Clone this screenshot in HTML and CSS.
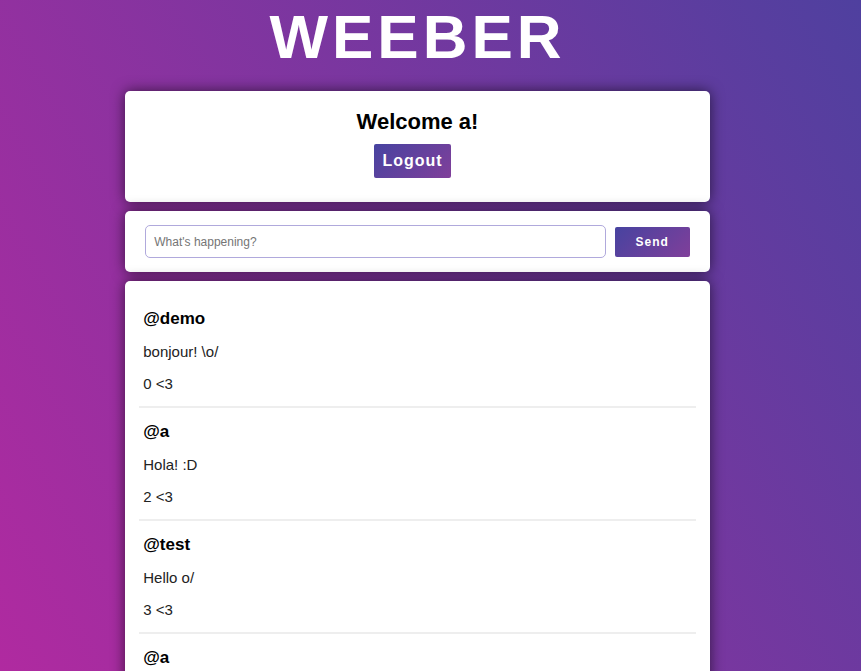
FILE: index.html
```html
<!DOCTYPE html>
<html lang="en">
<head>
<meta charset="utf-8">
<meta name="viewport" content="width=device-width, initial-scale=1">
<title>Weeber</title>
<link rel="stylesheet" href="styles.css">
</head>
<body>
<div class="page">
  <header class="header">
    <h1 class="title">WEEBER</h1>
  </header>
  <main class="content">
    <section class="card welcome">
      <h2 class="greeting">Welcome a!</h2>
      <button class="button logout" type="button">Logout</button>
    </section>
    <form class="card composer">
      <input class="message" type="text" name="message" aria-label="Message" placeholder="What's happening?">
      <button class="button send" type="button">Send</button>
    </form>
    <section class="card feed">
      <article class="post">
        <h3 class="author">@demo</h3>
        <p class="text">bonjour! \o/</p>
        <p class="text">0 &lt;3</p>
      </article>
      <article class="post">
        <h3 class="author">@a</h3>
        <p class="text">Hola! :D</p>
        <p class="text">2 &lt;3</p>
      </article>
      <article class="post">
        <h3 class="author">@test</h3>
        <p class="text">Hello o/</p>
        <p class="text">3 &lt;3</p>
      </article>
      <article class="post">
        <h3 class="author">@a</h3>
      </article>
    </section>
  </main>
</div>
</body>
</html>
```

FILE: styles.css
```css
* {
  box-sizing: border-box;
}

html {
  height: 100%;
}

body {
  height: 100%;
  margin: 0;
  overflow: hidden;
  font-family: "Liberation Sans", Arial, sans-serif;
  background: linear-gradient(60deg, #b02aa0, #4f409f);
}

h1, h2, h3, p {
  margin: 0;
}

.page {
  padding-right: 26px;
}

.header {
  padding-bottom: 18px;
  text-align: center;
}

.title {
  color: #fff;
  font-size: 62px;
  line-height: 73px;
  letter-spacing: 4px;
}

.content {
  display: flex;
  flex-direction: column;
  gap: 9px;
  width: 70%;
  margin: 0 auto;
}

.card {
  background: #fff;
  border-radius: 5px;
  box-shadow: 0 0 14px rgba(0, 0, 0, 0.6);
}

.welcome {
  padding: 18px 20px 24px;
  text-align: center;
}

.greeting {
  font-size: 22px;
  line-height: 26px;
  margin-bottom: 9px;
}

.button {
  border: 0;
  border-radius: 2px;
  padding: 0 8px;
  color: #fff;
  background: linear-gradient(135deg, #4743a0, #803f9a);
  font-family: inherit;
  font-weight: bold;
  letter-spacing: 1px;
}

.logout {
  height: 34px;
  margin-right: 10px;
  font-size: 16px;
  vertical-align: top;
}

.composer {
  display: flex;
  align-items: center;
  gap: 9px;
  padding: 14px 20px;
}

.message {
  flex: 1;
  min-width: 0;
  height: 33px;
  padding: 0 8px;
  border: 1px solid #b0a9dc;
  border-radius: 5px;
  background: #fff;
  font-family: inherit;
  font-size: 12px;
}

.message::placeholder {
  color: #757575;
}

.send {
  width: 75px;
  height: 30px;
  font-size: 12px;
}

.feed {
  padding: 14px;
}

.post {
  display: flex;
  flex-direction: column;
  gap: 14px;
  padding: 14px 4px 13px;
  border-bottom: 2px solid #eee;
}

.author {
  font-size: 17px;
  line-height: 20px;
}

.text {
  color: #222;
  font-size: 15px;
  line-height: 18px;
}
```
